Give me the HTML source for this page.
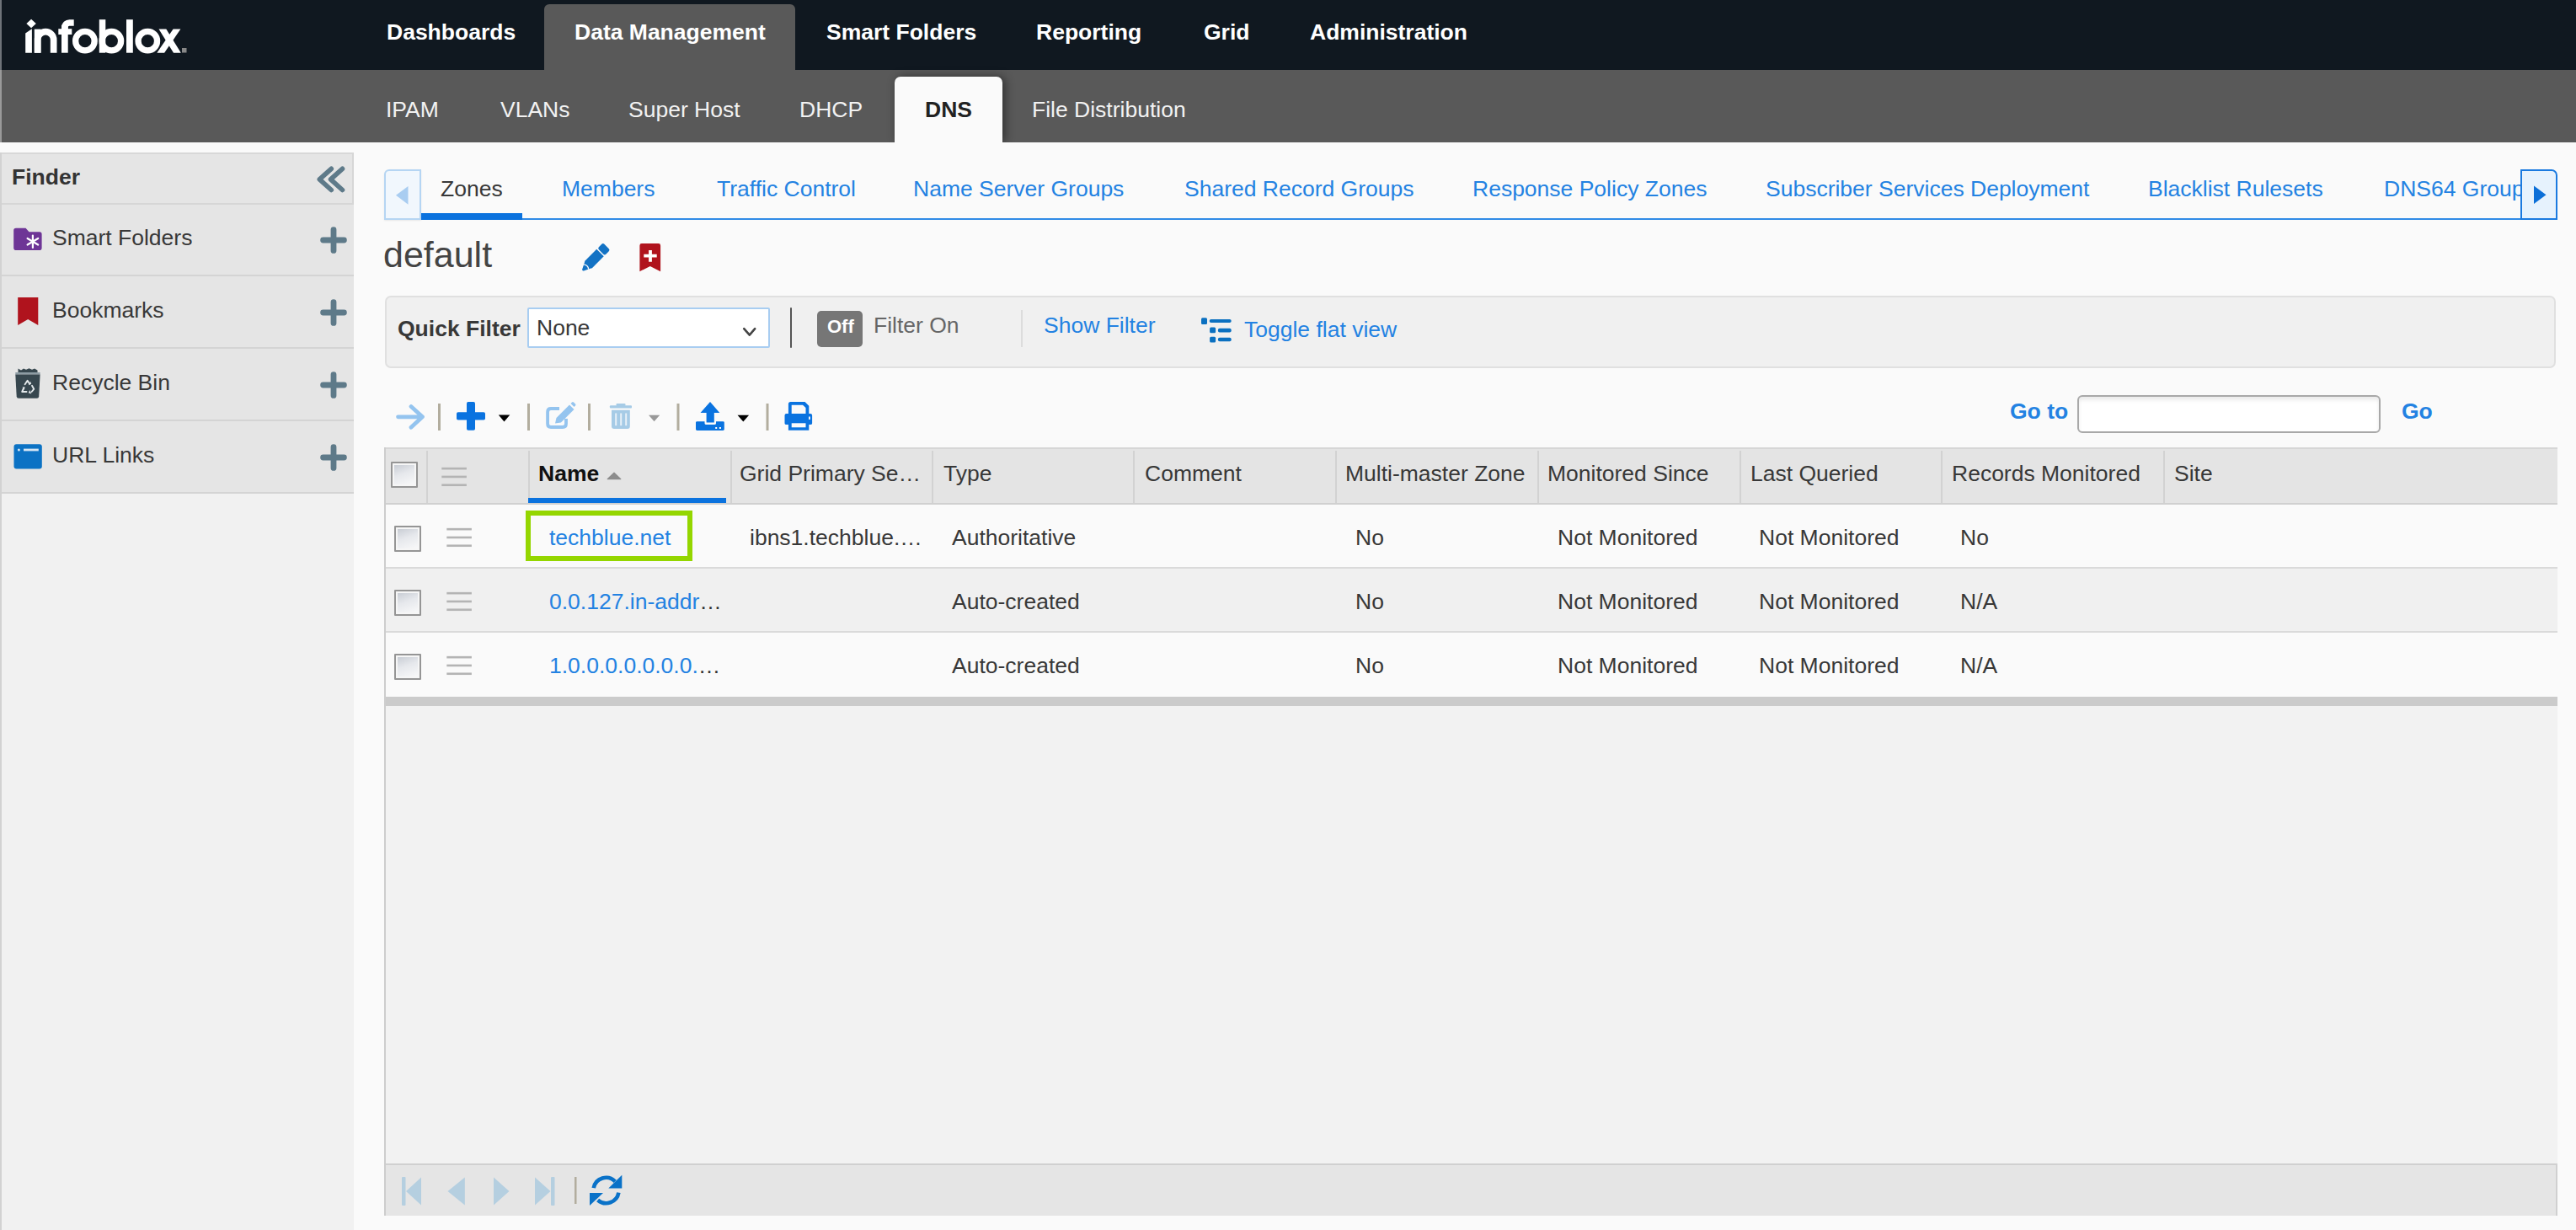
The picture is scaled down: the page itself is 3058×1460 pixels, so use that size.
<!DOCTYPE html>
<html><head><meta charset="utf-8">
<style>
*{box-sizing:border-box;margin:0;padding:0}
html,body{width:3058px;height:1460px;overflow:hidden;background:#fafafa;font-family:"Liberation Sans",sans-serif;position:relative}
.a{position:absolute}
.t{position:absolute;line-height:1;white-space:nowrap;font-size:26.5px}
.b{font-weight:bold}
.lk{color:#2382e2}
.dk{color:#383838}
</style></head><body>
<!-- left strip -->
<div class="a" style="left:0;top:0;width:2px;height:83px;background:#6e7379"></div>

<!-- top bar -->
<div class="a" style="left:2px;top:0;width:3056px;height:83px;background:#101820"></div>
<div class="a" style="left:646px;top:5px;width:298px;height:78px;background:#595959;border-radius:6px 6px 0 0"></div>
<svg class="a" style="left:0;top:0" width="240" height="83" viewBox="0 0 240 83">
 <g fill="#fff">
  <polygon points="37.1,22.7 42.8,28 37.1,33.3 31.4,28"/>
  <polygon points="30.2,39.5 37.9,34.2 37.9,62.7 30.2,62.7"/>
  <rect x="40.8" y="34.6" width="7.7" height="28.1"/>
  <path d="M44.65,62.7 V47.2 A9.5,9.5 0 0 1 63.65,47.2 V62.7" fill="none" stroke="#fff" stroke-width="7.7"/>
  <rect x="73" y="30" width="7.7" height="32.7"/>
  <path d="M76.85,40 V32.5 A5.6,5.6 0 0 1 82.5,27 H87.7" fill="none" stroke="#fff" stroke-width="7.7"/>
  <rect x="69.3" y="34.2" width="16" height="6.8"/>
  <circle cx="100.9" cy="48.65" r="11.25" fill="none" stroke="#fff" stroke-width="7.3"/>
  <rect x="117.8" y="23.2" width="7.5" height="39.5"/>
  <circle cx="132.35" cy="48.65" r="11.25" fill="none" stroke="#fff" stroke-width="7.3"/>
  <rect x="150" y="23.2" width="7.8" height="39.5"/>
  <circle cx="175.3" cy="48.65" r="11.25" fill="none" stroke="#fff" stroke-width="7.3"/>
  <polygon points="188.5,34.6 197.3,34.6 214.8,62.7 206,62.7"/>
  <polygon points="205.6,34.6 214.4,34.6 195.1,62.7 186.3,62.7"/>
 </g>
 <rect x="216" y="57" width="5.5" height="5.5" fill="#888"/>
</svg>
<div class="t b" style="left:459px;top:25px;color:#fff">Dashboards</div>
<div class="t b" style="left:682px;top:25px;color:#fff">Data Management</div>
<div class="t b" style="left:981px;top:25px;color:#fff">Smart Folders</div>
<div class="t b" style="left:1230px;top:25px;color:#fff">Reporting</div>
<div class="t b" style="left:1429px;top:25px;color:#fff">Grid</div>
<div class="t b" style="left:1555px;top:25px;color:#fff">Administration</div>

<!-- second bar -->
<div class="a" style="left:0;top:83px;width:2px;height:86px;background:#9a9a9a"></div>
<div class="a" style="left:2px;top:83px;width:3056px;height:86px;background:#595959"></div>
<div class="a" style="left:1062px;top:91px;width:128px;height:78px;background:#fafafa;border-radius:7px 7px 0 0;box-shadow:3px 0 12px rgba(0,0,0,.45);clip-path:inset(-30px -30px 0 -30px)"></div>
<div class="t" style="left:458px;top:117px;color:#f2f2f2">IPAM</div>
<div class="t" style="left:594px;top:117px;color:#f2f2f2">VLANs</div>
<div class="t" style="left:746px;top:117px;color:#f2f2f2">Super Host</div>
<div class="t" style="left:949px;top:117px;color:#f2f2f2">DHCP</div>
<div class="t b" style="left:1098px;top:117px;color:#222">DNS</div>
<div class="t" style="left:1225px;top:117px;color:#f2f2f2">File Distribution</div>

<!-- finder -->
<div class="a" style="left:0;top:181px;width:2px;height:1279px;background:#d2d2d2"></div>
<div class="a" style="left:2px;top:181px;width:418px;height:1279px;background:#f1f1f1"></div>
<div class="a" style="left:2px;top:181px;width:418px;height:405px;background:#e5e5e5"></div>
<div class="a" style="left:2px;top:181px;width:418px;height:62px;border-top:2px solid #d8d8d8;border-right:2px solid #d6d6d6;border-bottom:2px solid #d6d6d6"></div>
<div class="a" style="left:2px;top:326px;width:418px;height:2px;background:#d4d4d4"></div>
<div class="a" style="left:2px;top:412px;width:418px;height:2px;background:#d4d4d4"></div>
<div class="a" style="left:2px;top:498px;width:418px;height:2px;background:#d4d4d4"></div>
<div class="a" style="left:2px;top:584px;width:418px;height:2px;background:#d4d4d4"></div>
<div class="t b" style="left:14px;top:197px;color:#333">Finder</div>
<svg class="a" style="left:370px;top:190px" width="45" height="45" viewBox="0 0 45 45">
 <path d="M23.3,10.3 L9.3,22.9 L23.3,35.5 M36.5,10.3 L22.5,22.9 L36.5,35.5" fill="none" stroke="#5e7a89" stroke-width="5.6" stroke-linecap="round" stroke-linejoin="round"/>
</svg>
<!-- folder -->
<svg class="a" style="left:10px;top:262px" width="48" height="42" viewBox="10 262 48 42">
 <path d="M16.2,273.5 Q16.2,270.8 19,270.8 L30.5,270.8 L34.5,275.3 L47,275.3 Q49.6,275.3 49.6,278 L49.6,294.2 Q49.6,297 47,297 L19,297 Q16.2,297 16.2,294.2 Z" fill="#6e3596"/>
 <g stroke="#fff" stroke-width="2.2" stroke-linecap="round">
  <line x1="38.9" y1="279.5" x2="38.9" y2="294"/>
  <line x1="32.6" y1="283" x2="45.2" y2="290.5"/>
  <line x1="32.6" y1="290.5" x2="45.2" y2="283"/>
 </g>
</svg>
<!-- bookmark -->
<svg class="a" style="left:10px;top:345px" width="48" height="48" viewBox="10 345 48 48">
 <path d="M21.2,353 L45.3,353 L45.3,386 L33.2,379 L21.2,386 Z" fill="#b0131d"/>
</svg>
<!-- recycle bin -->
<svg class="a" style="left:10px;top:430px" width="48" height="50" viewBox="10 430 48 50">
 <path d="M21.5,437.5 L25,439.5 L28,437.5 L31,438.8 L34.5,437.2 L38,438.8 L41,437.5 L44.5,439.5 L44.5,442.5 L21.5,442.5 Z" fill="#37474f"/>
 <rect x="18.3" y="442" width="29.3" height="2.6" fill="#8d9ca4"/>
 <path d="M18.3,444.6 L47.6,444.6 L46.2,470.5 Q46,472.7 43.8,472.7 L22.1,472.7 Q19.9,472.7 19.7,470.5 Z" fill="#37474f"/>
 <g fill="none" stroke="#e3e8eb" stroke-width="1.9" stroke-linecap="round" stroke-linejoin="round">
  <path d="M29.6,456.2 L32.6,451.8 L35.2,455.6"/>
  <path d="M38,457.8 L40.2,461.8 L37.6,465"/>
  <path d="M31.5,465 L26.2,465 L28,461"/>
 </g>
 <g fill="#e3e8eb">
  <path d="M33.8,457.2 L37.2,455.8 L36.2,452.8 Z"/>
  <path d="M35.2,463 L33.8,466.5 L37.4,467.5 Z"/>
  <path d="M26.6,459.2 L29.8,459.6 L28.6,462.8 Z"/>
 </g>
</svg>
<!-- url links -->
<svg class="a" style="left:10px;top:520px" width="48" height="44" viewBox="10 520 48 44">
 <rect x="16.5" y="527.3" width="33.3" height="29.3" rx="3" fill="#0b72c4"/>
 <circle cx="22.4" cy="534" r="1.5" fill="#d6e6f4"/>
 <rect x="28" y="532.6" width="17.8" height="2.8" fill="#d6e6f4"/>
</svg>
<div class="t dk" style="left:62px;top:269px">Smart Folders</div>
<div class="t dk" style="left:62px;top:355px">Bookmarks</div>
<div class="t dk" style="left:62px;top:441px">Recycle Bin</div>
<div class="t dk" style="left:62px;top:527px">URL Links</div>
<svg class="a" style="left:376px;top:265px" width="40" height="40" viewBox="0 0 40 40"><path d="M20,7.6 V32.4 M7.6,20 H32.4" stroke="#5e7a89" stroke-width="6.8" stroke-linecap="round"/></svg>
<svg class="a" style="left:376px;top:351px" width="40" height="40" viewBox="0 0 40 40"><path d="M20,7.6 V32.4 M7.6,20 H32.4" stroke="#5e7a89" stroke-width="6.8" stroke-linecap="round"/></svg>
<svg class="a" style="left:376px;top:437px" width="40" height="40" viewBox="0 0 40 40"><path d="M20,7.6 V32.4 M7.6,20 H32.4" stroke="#5e7a89" stroke-width="6.8" stroke-linecap="round"/></svg>
<svg class="a" style="left:376px;top:523px" width="40" height="40" viewBox="0 0 40 40"><path d="M20,7.6 V32.4 M7.6,20 H32.4" stroke="#5e7a89" stroke-width="6.8" stroke-linecap="round"/></svg>


<!-- main -->
<!-- tabs -->
<div class="a" style="left:456px;top:201px;width:44px;height:60px;background:#f1f7fd;border:2px solid #b5d5f3;border-radius:6px 0 0 0;box-shadow:0 1px 2px rgba(0,0,0,.08)"></div>
<svg class="a" style="left:466px;top:216px" width="24" height="32" viewBox="0 0 24 32"><path d="M18.5,5 L4,15.8 L18.5,26.8 Z" fill="#a9cdf1"/></svg>
<div class="a" style="left:500px;top:258.5px;width:2492px;height:2.2px;background:#2f8ae6"></div>
<div class="a" style="left:500px;top:253px;width:120px;height:7.5px;background:#0b72de"></div>
<div class="t dk" style="left:523px;top:211px">Zones</div>
<div class="t lk" style="left:667px;top:211px">Members</div>
<div class="t lk" style="left:851px;top:211px">Traffic Control</div>
<div class="t lk" style="left:1084px;top:211px">Name Server Groups</div>
<div class="t lk" style="left:1406px;top:211px">Shared Record Groups</div>
<div class="t lk" style="left:1748px;top:211px">Response Policy Zones</div>
<div class="t lk" style="left:2096px;top:211px">Subscriber Services Deployment</div>
<div class="t lk" style="left:2550px;top:211px">Blacklist Rulesets</div>
<div class="a" style="left:2820px;top:201px;width:172px;height:57px;overflow:hidden"><div class="t lk" style="left:10px;top:10px">DNS64 Group</div></div>
<div class="a" style="left:2992px;top:201px;width:44px;height:60px;background:#e6f2fd;border:2px solid #1a7ae0;border-radius:0 7px 0 0"></div>
<svg class="a" style="left:3002px;top:215px" width="26" height="32" viewBox="0 0 26 32"><path d="M6,5.5 L20.5,16.3 L6,27 Z" fill="#0b6fd8"/></svg>

<!-- title -->
<div class="t" style="left:455px;top:281px;font-size:43px;color:#444">default</div>
<svg class="a" style="left:684px;top:283px" width="46" height="46" viewBox="684 283 46 46">
 <g transform="translate(691.3,321.3) rotate(-45)" fill="#1372c4">
  <path d="M1,-1.2 L10.5,-6 L10.5,6 L1,1.2 Q-0.5,0 1,-1.2 Z"/>
  <rect x="10" y="-6" width="20" height="12"/>
  <rect x="31.5" y="-6" width="9.2" height="12" rx="2.2"/>
  <path d="M6.5,-4 Q9.5,0 6.5,4" fill="none" stroke="#fafafa" stroke-width="1.4"/>
 </g>
</svg>
<svg class="a" style="left:754px;top:284px" width="36" height="44" viewBox="754 284 36 44">
 <path d="M759.4,291.5 Q759.4,289.1 761.8,289.1 L781.7,289.1 Q784.1,289.1 784.1,291.5 L784.1,322.2 L771.8,315.9 L759.4,322.2 Z" fill="#b0131d"/>
 <path d="M772,297 V310.7 M764.3,303.7 H779.7" stroke="#fff" stroke-width="3.8"/>
</svg>

<!-- filter bar -->
<div class="a" style="left:457px;top:351px;width:2577px;height:86px;background:#f0f0f0;border:2px solid #e0e0e0;border-radius:7px"></div>
<div class="t b dk" style="left:472px;top:377px">Quick Filter</div>
<div class="a" style="left:626px;top:365px;width:288px;height:48px;background:#fff;border:2px solid #a8cdf1;border-radius:2px"></div>
<div class="t dk" style="left:637px;top:376px">None</div>
<svg class="a" style="left:878px;top:383px" width="24" height="20" viewBox="0 0 24 20"><path d="M5.2,7.2 L11.8,14.6 L18.2,7.2" fill="none" stroke="#444" stroke-width="2.6" stroke-linecap="round" stroke-linejoin="round"/></svg>
<div class="a" style="left:937.6px;top:365px;width:2.6px;height:48px;background:#555;border-radius:1.3px"></div>
<div class="a" style="left:970px;top:369px;width:54px;height:43px;background:#767676;border-radius:5px"></div>
<div class="t b" style="left:982px;top:377px;font-size:22px;color:#fff">Off</div>
<div class="t" style="left:1037px;top:373px;color:#666">Filter On</div>
<div class="a" style="left:1212px;top:368px;width:2px;height:44px;background:#dcdcdc"></div>
<div class="t lk" style="left:1239px;top:373px">Show Filter</div>
<svg class="a" style="left:1420px;top:370px" width="48" height="42" viewBox="1420 370 48 42" fill="#0b70c0">
 <rect x="1426" y="377.2" width="7" height="7.7" rx="1.5"/><rect x="1435.7" y="379" width="26" height="4.1" rx="2"/>
 <rect x="1436.1" y="388.5" width="7" height="6.8" rx="1.5"/><rect x="1445.9" y="389.8" width="15.8" height="4.7" rx="2"/>
 <rect x="1436.1" y="399.7" width="7" height="6.8" rx="1.5"/><rect x="1445.9" y="400.8" width="15.8" height="4.4" rx="2"/>
</svg>
<div class="t lk" style="left:1477px;top:378px">Toggle flat view</div>

<!-- toolbar -->
<svg class="a" style="left:460px;top:470px" width="520" height="48" viewBox="460 470 520 48">
 <g fill="none" stroke="#94c4ef" stroke-width="4.7" stroke-linecap="round" stroke-linejoin="round">
  <path d="M472.5,494.8 H501.5 M488,482.5 L501.5,494.8 L488,507.3"/>
 </g>
 <g fill="#b2ad9e">
  <rect x="520" y="479" width="3" height="32"/><rect x="626" y="479" width="3" height="32"/>
  <rect x="698" y="479" width="3" height="32"/><rect x="803.5" y="479" width="3" height="32"/>
  <rect x="909.5" y="479" width="3" height="32"/>
 </g>
 <g fill="#0a73e0">
  <rect x="554" y="477.1" width="10" height="33.6" rx="1.8"/>
  <rect x="542" y="489.2" width="34" height="9.3" rx="1.8"/>
 </g>
 <path d="M591.8,492.5 H605.3 L598.5,500.4 Z" fill="#000"/>
 <g fill="none" stroke="#94c4ef" stroke-width="3.8">
  <path d="M664,485 H654 Q650.1,485 650.1,489 V503 Q650.1,507 654,507 H668 Q672,507 672,503 V497"/>
 </g>
 <path d="M659,502.5 L660.5,496 L676,480.5 L681.5,486 L666,501.5 Z" fill="#94c4ef"/>
 <path d="M677.5,479 L679,477.5 Q680,476.5 681,477.5 L683,479.5 Q684,480.5 683,481.5 L681.5,483 Z" fill="#94c4ef"/>
 <g fill="#a6cbe6">
  <rect x="731.5" y="479.1" width="11" height="3" rx="1"/>
  <rect x="723.9" y="481.3" width="26.1" height="3.3" rx="1"/>
 </g>
 <path d="M726,486.7 H747.8 V506 Q747.8,509 744.8,509 H729 Q726,509 726,506 Z" fill="#a6cbe6"/>
 <g fill="#e8f1f8"><rect x="730.2" y="490.5" width="2" height="14.7"/><rect x="736.2" y="490.5" width="2" height="14.7"/><rect x="742.2" y="490.5" width="2" height="14.7"/></g>
 <path d="M770,492.7 H783.2 L776.6,500.3 Z" fill="#999"/>
 <g fill="#0a73e0">
  <path d="M843,477 L854.3,490 H847.8 V501.4 H838.6 V490 H831.5 Z"/>
  <path d="M826,501.5 Q826,500.3 827.5,500.3 H836.5 V502.5 Q836.5,504 838.5,504 H848 Q850,504 850,502.5 V500.3 H858.3 Q859.8,500.3 859.8,501.5 V509.5 Q859.8,510.9 858.3,510.9 H827.5 Q826,510.9 826,509.5 Z"/>
 </g>
 <g fill="#fff"><rect x="849.2" y="507" width="2" height="2"/><rect x="853.9" y="507" width="2" height="2"/></g>
 <path d="M875.5,492.7 H889.1 L882.3,500.4 Z" fill="#000"/>
 <g fill="#0a73e0">
  <path d="M935.9,479.5 Q935.9,477 938.5,477 H955.5 L960.3,481.8 V491 H956.5 V484 L953,480.7 H939.7 V491 H935.9 Z"/>
  <path d="M933.5,491 H962 Q964.1,491 964.1,493 V502.5 Q964.1,504 962,504 H960.3 V510.7 H935.9 V504 H933.5 Q931.5,504 931.5,502.5 V493 Q931.5,491 933.5,491 Z"/>
 </g>
 <rect x="939.7" y="502.3" width="16.8" height="5" fill="#fafafa"/>
 <rect x="960" y="494.5" width="1.8" height="3.5" fill="#fff"/>
</svg>
<div class="t b lk" style="left:2386px;top:475px">Go to</div>
<div class="a" style="left:2466px;top:469px;width:360px;height:45px;background:#fff;border:2px solid #a8a8a8;border-radius:6px;box-shadow:inset 0 4px 4px rgba(0,0,0,.08)"></div>
<div class="t b lk" style="left:2851px;top:475px">Go</div>

<!-- grid -->
<div class="a" style="left:456px;top:531px;width:2580px;height:912px;background:#f2f2f2"></div>
<div class="a" style="left:456px;top:531px;width:2px;height:912px;background:#cdcdcd"></div>
<!-- header -->
<div class="a" style="left:458px;top:531px;width:2578px;height:68px;background:#e4e4e4;border-top:2px solid #d6d6d6;border-bottom:2px solid #d0d0d0"></div>
<div class="a" style="left:506px;top:535px;width:2px;height:62px;background:#d2d2d2"></div>
<div class="a" style="left:627px;top:535px;width:2px;height:62px;background:#d2d2d2"></div>
<div class="a" style="left:867px;top:535px;width:2px;height:62px;background:#d2d2d2"></div>
<div class="a" style="left:1106px;top:535px;width:2px;height:62px;background:#d2d2d2"></div>
<div class="a" style="left:1345px;top:535px;width:2px;height:62px;background:#d2d2d2"></div>
<div class="a" style="left:1585px;top:535px;width:2px;height:62px;background:#d2d2d2"></div>
<div class="a" style="left:1825px;top:535px;width:2px;height:62px;background:#d2d2d2"></div>
<div class="a" style="left:2065px;top:535px;width:2px;height:62px;background:#d2d2d2"></div>
<div class="a" style="left:2304px;top:535px;width:2px;height:62px;background:#d2d2d2"></div>
<div class="a" style="left:2568px;top:535px;width:2px;height:62px;background:#d2d2d2"></div>
<div class="a" style="left:627px;top:590.5px;width:235px;height:6.8px;background:#0b72de"></div>
<div class="a" style="left:464px;top:548px;width:32px;height:31px;border:2.5px solid #959595;border-radius:1px;background:linear-gradient(160deg,#c3c8d0 0%,#e6e8ec 45%,#fbfbfb 100%);box-shadow:inset 0 0 0 2px #f6f6f6"></div>
<svg class="a" style="left:523px;top:552px" width="32" height="26" viewBox="0 0 32 26"><g fill="#b4b4b4"><rect x="1.3" y="2.85" width="29.6" height="2.6"/><rect x="1.3" y="12.65" width="29.6" height="2.6"/><rect x="1.3" y="22.45" width="29.6" height="2.6"/></g></svg>
<div class="t b" style="left:639px;top:549px;color:#111">Name</div>
<svg class="a" style="left:718px;top:556px" width="22" height="18" viewBox="0 0 22 18"><path d="M3.2,12.6 L11,5.2 L18.8,12.6 Z" fill="#8c8c8c" stroke="#8c8c8c" stroke-width="1.2" stroke-linejoin="round"/></svg>
<div class="t dk" style="left:878px;top:549px">Grid Primary Se…</div>
<div class="t dk" style="left:1120px;top:549px">Type</div>
<div class="t dk" style="left:1359px;top:549px">Comment</div>
<div class="t dk" style="left:1597px;top:549px">Multi-master Zone</div>
<div class="t dk" style="left:1837px;top:549px">Monitored Since</div>
<div class="t dk" style="left:2078px;top:549px">Last Queried</div>
<div class="t dk" style="left:2317px;top:549px">Records Monitored</div>
<div class="t dk" style="left:2581px;top:549px">Site</div>
<!-- rows -->
<div class="a" style="left:458px;top:599px;width:2578px;height:74px;background:#fafafa"></div>
<div class="a" style="left:458px;top:673px;width:2578px;height:2px;background:#dadada"></div>
<div class="a" style="left:458px;top:675px;width:2578px;height:74px;background:#f0f0f0"></div>
<div class="a" style="left:458px;top:749px;width:2578px;height:2px;background:#dadada"></div>
<div class="a" style="left:458px;top:751px;width:2578px;height:76px;background:#fafafa"></div>
<div class="a" style="left:458px;top:827px;width:2578px;height:11px;background:#cbcbcb"></div>
<div class="a" style="left:468px;top:624px;width:32px;height:31px;border:2.5px solid #959595;border-radius:1px;background:linear-gradient(160deg,#c3c8d0 0%,#e6e8ec 45%,#fbfbfb 100%);box-shadow:inset 0 0 0 2px #f6f6f6"></div>
<svg class="a" style="left:529px;top:624px" width="32" height="26" viewBox="0 0 32 26"><g fill="#b4b4b4"><rect x="1.3" y="2.85" width="29.6" height="2.6"/><rect x="1.3" y="12.65" width="29.6" height="2.6"/><rect x="1.3" y="22.45" width="29.6" height="2.6"/></g></svg>
<div class="t lk" style="left:652px;top:625px">techblue.net</div>
<div class="t dk" style="left:890px;top:625px">ibns1.techblue.…</div>
<div class="t dk" style="left:1130px;top:625px">Authoritative</div>
<div class="t dk" style="left:1609px;top:625px">No</div>
<div class="t dk" style="left:1849px;top:625px">Not Monitored</div>
<div class="t dk" style="left:2088px;top:625px">Not Monitored</div>
<div class="t dk" style="left:2327px;top:625px">No</div>
<div class="a" style="left:468px;top:700px;width:32px;height:31px;border:2.5px solid #959595;border-radius:1px;background:linear-gradient(160deg,#c3c8d0 0%,#e6e8ec 45%,#fbfbfb 100%);box-shadow:inset 0 0 0 2px #f6f6f6"></div>
<svg class="a" style="left:529px;top:700px" width="32" height="26" viewBox="0 0 32 26"><g fill="#b4b4b4"><rect x="1.3" y="2.85" width="29.6" height="2.6"/><rect x="1.3" y="12.65" width="29.6" height="2.6"/><rect x="1.3" y="22.45" width="29.6" height="2.6"/></g></svg>
<div class="t lk" style="left:652px;top:701px">0.0.127.in-addr<span style="color:#333">…</span></div>
<div class="t dk" style="left:1130px;top:701px">Auto-created</div>
<div class="t dk" style="left:1609px;top:701px">No</div>
<div class="t dk" style="left:1849px;top:701px">Not Monitored</div>
<div class="t dk" style="left:2088px;top:701px">Not Monitored</div>
<div class="t dk" style="left:2327px;top:701px">N/A</div>
<div class="a" style="left:468px;top:776px;width:32px;height:31px;border:2.5px solid #959595;border-radius:1px;background:linear-gradient(160deg,#c3c8d0 0%,#e6e8ec 45%,#fbfbfb 100%);box-shadow:inset 0 0 0 2px #f6f6f6"></div>
<svg class="a" style="left:529px;top:776px" width="32" height="26" viewBox="0 0 32 26"><g fill="#b4b4b4"><rect x="1.3" y="2.85" width="29.6" height="2.6"/><rect x="1.3" y="12.65" width="29.6" height="2.6"/><rect x="1.3" y="22.45" width="29.6" height="2.6"/></g></svg>
<div class="t lk" style="left:652px;top:777px">1.0.0.0.0.0.0.0.<span style="color:#333">…</span></div>
<div class="t dk" style="left:1130px;top:777px">Auto-created</div>
<div class="t dk" style="left:1609px;top:777px">No</div>
<div class="t dk" style="left:1849px;top:777px">Not Monitored</div>
<div class="t dk" style="left:2088px;top:777px">Not Monitored</div>
<div class="t dk" style="left:2327px;top:777px">N/A</div>
<div class="a" style="left:624px;top:606px;width:198px;height:60px;border:6px solid #94d600"></div>
<!-- footer -->
<div class="a" style="left:458px;top:1381px;width:2578px;height:62px;background:#e5e5e5;border-top:2px solid #d0d0d0;border-right:2px solid #d0d0d0"></div>
<svg class="a" style="left:470px;top:1390px" width="280" height="50" viewBox="470 1390 280 50">
 <g fill="#b5cfe0">
  <rect x="477" y="1397" width="4.5" height="34" rx="1"/>
  <path d="M500,1397.5 L500,1430.5 L482,1414 Z"/>
  <path d="M551.8,1397.5 L551.8,1430.5 L531.5,1414 Z"/>
  <path d="M586,1397.5 L586,1430.5 L604.5,1414 Z"/>
  <path d="M635,1397.5 L635,1430.5 L653.5,1414 Z"/>
  <rect x="654" y="1397" width="4.5" height="34" rx="1"/>
 </g>
 <rect x="682" y="1397" width="2.5" height="32" fill="#b2ad9e"/>
 <g fill="none" stroke="#0a72c8" stroke-width="4.6">
  <path d="M704.7,1410.1 A15.1,15.1 0 0 1 730.2,1402.3"/>
  <path d="M734.4,1415.6 A15.1,15.1 0 0 1 709.6,1424.4"/>
 </g>
 <g fill="#0a72c8">
  <path d="M738.3,1394.7 V1410.5 H722.3 Z"/>
  <path d="M700,1431 V1416 H716 Z"/>
 </g>
</svg>


</body></html>
